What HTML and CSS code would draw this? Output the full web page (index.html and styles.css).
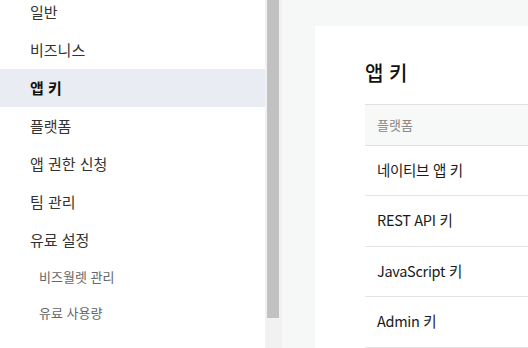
FILE: index.html
```html
<!DOCTYPE html>
<html lang="ko">
<head>
<meta charset="utf-8">
<link rel="stylesheet" href="styles.css">
</head>
<body>
<div class="layout">
  <nav class="sidebar">
    <ul class="menu">
      <li class="item">일반</li>
      <li class="item">비즈니스</li>
      <li class="item active">앱 키</li>
      <li class="item">플랫폼</li>
      <li class="item">앱 권한 신청</li>
      <li class="item">팀 관리</li>
      <li class="item">유료 설정</li>
      <li class="sub">비즈월렛 관리</li>
      <li class="sub">유료 사용량</li>
    </ul>
  </nav>
  <div class="scrollbar"><div class="thumb"></div></div>
  <main class="main">
    <section class="card">
      <h2 class="title">앱 키</h2>
      <div class="table">
        <div class="thead">플랫폼</div>
        <div class="row">네이티브 앱 키</div>
        <div class="row">REST API 키</div>
        <div class="row">JavaScript 키</div>
        <div class="row">Admin 키</div>
      </div>
    </section>
  </main>
</div>
</body>
</html>
```
FILE: styles.css
```css
* { box-sizing: border-box; }
html, body {
  margin: 0;
  padding: 0;
  width: 528px;
  height: 348px;
  overflow: hidden;
  font-family: "Noto Sans CJK KR", "Noto Sans", sans-serif;
  background: #f6f7f7;
}
.layout {
  display: flex;
  height: 348px;
}
.sidebar {
  width: 265px;
  flex: none;
  background: #fff;
  overflow: hidden;
}
.menu {
  list-style: none;
  margin: -7px 0 0 0;
  padding: 0;
}
.item {
  height: 38px;
  line-height: 38px;
  padding-left: 30px;
  font-size: 15px;
  color: #333;
}
.item.active {
  background: #e9ecf3;
  color: #111;
  font-weight: 700;
}
.sub {
  height: 36px;
  line-height: 36px;
  padding-left: 39px;
  font-size: 13px;
  color: #666;
}
.scrollbar {
  width: 17px;
  flex: none;
  background: #f1f1f1;
  padding: 0 3px 0 2px;
}
.thumb {
  height: 318px;
  background: #c1c1c1;
}
.main {
  flex: 1;
  padding: 26px 0 0 33px;
  overflow: hidden;
}
.card {
  width: 600px;
  height: 400px;
  background: #fff;
  padding: 33px 0 0 50px;
}
.title {
  margin: 0 0 17px 0;
  font-size: 20px;
  line-height: 28px;
  font-weight: 500;
  color: #111;
}
.table {
  border-top: 1px solid #e1e1e1;
}
.thead {
  height: 41px;
  line-height: 40px;
  background: #f7f8f8;
  border-bottom: 1px solid #e1e1e1;
  padding-left: 12px;
  font-size: 13px;
  color: #888;
}
.row {
  height: 50.4px;
  line-height: 48px;
  border-bottom: 1px solid #e4e4e4;
  padding-left: 12px;
  font-size: 14.5px;
  letter-spacing: -0.3px;
  color: #1a1a1a;
}
```
